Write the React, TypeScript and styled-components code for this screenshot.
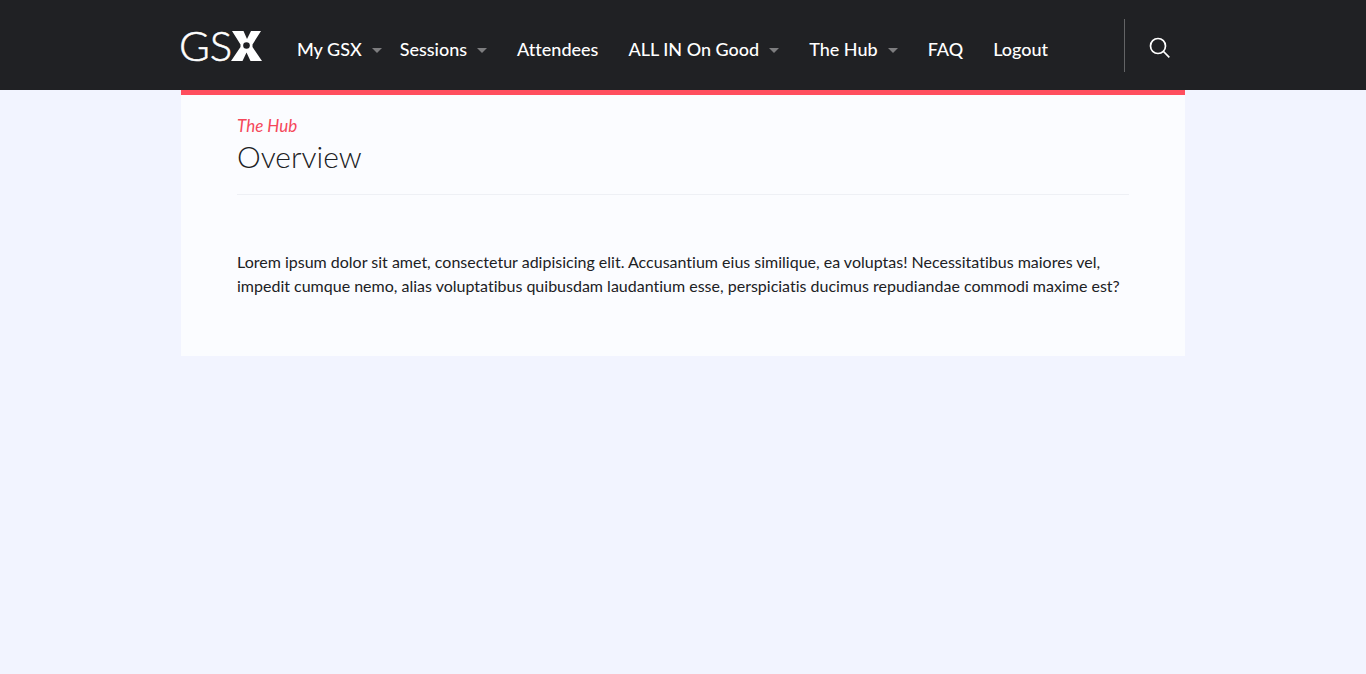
import React from "react";
import styled, { createGlobalStyle } from "styled-components";

const GlobalStyle = createGlobalStyle`
  *, *::before, *::after { box-sizing: border-box; }
  body {
    margin: 0;
    background: #f2f4ff;
    color: #202124;
    font-family: Lato, "Open Sans", sans-serif;
    font-size: 16px;
    font-variant-ligatures: none;
    line-height: 24px;
  }
`;

const Header = styled.header`
  background: #202124;
  color: #fff;
`;

const Container = styled.div`
  width: 100%;
  max-width: 1004px;
  margin: 0 auto;
`;

const Bar = styled(Container)`
  display: flex;
  align-items: center;
  height: 90px;
`;

const LogoLink = styled.a`
  display: block;
  height: 50px;
  margin: 0 34px 0 -2px;
`;

const LogoText = styled.text`
  font-family: Lato, sans-serif;
  font-weight: 300;
  font-size: 42px;
  fill: #fff;
  stroke: #fff;
  stroke-width: 0.5px;
`;

const Nav = styled.nav`
  flex: 1;
`;

const Menu = styled.ul`
  display: flex;
  margin: 0;
  padding: 8px 0 0;
  list-style: none;
`;

const MenuItem = styled.li<{ $gap?: number }>`
  margin-right: ${({ $gap = 30 }) => $gap}px;
`;

const MenuLink = styled.a<{ $menu?: boolean }>`
  display: flex;
  align-items: center;
  color: #fff;
  font-size: 18px;
  font-weight: 500;
  text-decoration: none;
  white-space: nowrap;

  &::after {
    content: ${({ $menu }) => ($menu ? '""' : "none")};
    margin: 2px 0 0 10px;
    border: 5px solid transparent;
    border-top-color: #7d7d7f;
    border-bottom-width: 0;
  }
`;

const SearchArea = styled.div`
  display: flex;
  align-items: center;
  height: 53px;
  padding: 6px 14px 0 24px;
  border-left: 1px solid #636466;
`;

const SearchButton = styled.button`
  display: block;
  padding: 0;
  border: 0;
  background: none;
  color: #fff;
  line-height: 0;
  cursor: pointer;
`;

const Panel = styled(Container).attrs({ as: "main" })`
  padding: 19px 56px 58px;
  border-top: 5px solid #ff4e5e;
  background: #fbfcff;
`;

const PageHead = styled.div`
  padding-bottom: 20px;
  border-bottom: 1px solid #eef0f5;
`;

const Section = styled.p`
  margin: 0;
  color: #f5475a;
  font-size: 17px;
  font-style: italic;
  line-height: 24px;
`;

const Title = styled.h1`
  margin: 0;
  font-size: 30px;
  font-weight: 300;
  line-height: 36px;
`;

const Copy = styled.p`
  margin: 55px 0 0;
`;

const links = [
  { label: "My GSX", menu: true, gap: 18 },
  { label: "Sessions", menu: true },
  { label: "Attendees" },
  { label: "ALL IN On Good", menu: true },
  { label: "The Hub", menu: true },
  { label: "FAQ" },
  { label: "Logout" },
];

function Logo() {
  return (
    <svg width="84" height="50" viewBox="0 0 84 50" role="img" aria-label="GSX">
      <LogoText x="0" y="41">GS</LogoText>
      <path
        fill="#fff"
        d="M53 11H64.500L68 19L72 11H82L73.500 24.500V27L83 41H71.500L67.500 32.500L63.500 41H52L61.500 27V24.500Z"
      />
      <circle cx="67.500" cy="25.500" r="3.300" fill="#202124" />
    </svg>
  );
}

export default function App() {
  return (
    <>
      <GlobalStyle />
      <Header>
        <Bar>
          <LogoLink href="#"><Logo /></LogoLink>
          <Nav>
            <Menu>
              {links.map((l) => (
                <MenuItem key={l.label} $gap={l.gap}>
                  <MenuLink href="#" $menu={l.menu}>{l.label}</MenuLink>
                </MenuItem>
              ))}
            </Menu>
          </Nav>
          <SearchArea>
            <SearchButton type="button" aria-label="Search">
              <svg width="22" height="22" viewBox="0 0 22 22" fill="none" stroke="currentColor" strokeWidth="1.700">
                <circle cx="9" cy="9" r="7.500" />
                <path d="M14.500 14.500L20.300 20.300" />
              </svg>
            </SearchButton>
          </SearchArea>
        </Bar>
      </Header>
      <Panel>
        <PageHead>
          <Section>The Hub</Section>
          <Title>Overview</Title>
        </PageHead>
        <Copy>
          Lorem ipsum dolor sit amet, consectetur adipisicing elit. Accusantium eius similique, ea voluptas! Necessitatibus maiores vel, impedit cumque nemo, alias voluptatibus quibusdam laudantium esse, perspiciatis ducimus repudiandae commodi maxime est?
        </Copy>
      </Panel>
    </>
  );
}
